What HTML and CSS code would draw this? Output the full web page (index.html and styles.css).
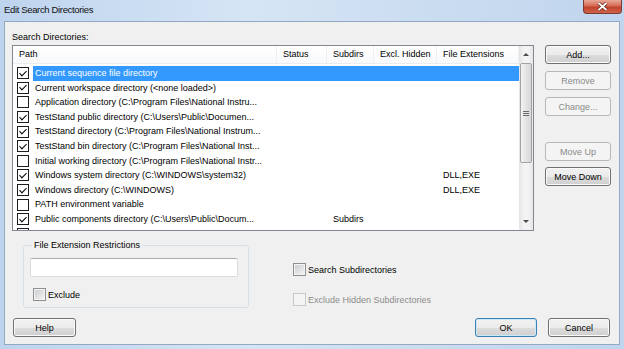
FILE: index.html
```html
<!DOCTYPE html>
<html lang="en">
<head>
    <meta charset="UTF-8">
    <meta name="viewport" content="width=device-width, initial-scale=1.0">
    <title>Edit Search Directories</title>
    <link rel="stylesheet" href="styles.css">
</head>
<body>
    <div class="window">
        <div class="titlebar">
            <span class="title">Edit Search Directories</span>
            <button class="close">
                <svg width="11" height="9" viewBox="0 0 11 9">
                    <path d="M1.5 1 L9.5 8 M9.5 1 L1.5 8" stroke="#5a1d14" stroke-width="3.2"/>
                    <path d="M1.5 1 L9.5 8 M9.5 1 L1.5 8" stroke="#fff" stroke-width="1.8"/>
                </svg>
            </button>
        </div>
        <div class="client">
            <div class="top">
                <div class="list-col">
                    <div class="caption">Search Directories:</div>
                    <div class="listbox">
                        <div class="table">
                            <div class="head">
                                <div>Path</div>
                                <div>Status</div>
                                <div>Subdirs</div>
                                <div>Excl. Hidden</div>
                                <div>File Extensions</div>
                            </div>
                            <div class="rows">
                                <div class="row selected"><span class="check on"></span><div class="cells"><span>Current sequence file directory</span><span></span><span></span><span></span><span></span></div></div>
                                <div class="row"><span class="check on"></span><div class="cells"><span>Current workspace directory (&lt;none loaded&gt;)</span><span></span><span></span><span></span><span></span></div></div>
                                <div class="row"><span class="check"></span><div class="cells"><span>Application directory (C:\Program Files\National Instru...</span><span></span><span></span><span></span><span></span></div></div>
                                <div class="row"><span class="check on"></span><div class="cells"><span>TestStand public directory (C:\Users\Public\Documen...</span><span></span><span></span><span></span><span></span></div></div>
                                <div class="row"><span class="check on"></span><div class="cells"><span>TestStand directory (C:\Program Files\National Instrum...</span><span></span><span></span><span></span><span></span></div></div>
                                <div class="row"><span class="check on"></span><div class="cells"><span>TestStand bin directory (C:\Program Files\National Inst...</span><span></span><span></span><span></span><span></span></div></div>
                                <div class="row"><span class="check"></span><div class="cells"><span>Initial working directory (C:\Program Files\National Instr...</span><span></span><span></span><span></span><span></span></div></div>
                                <div class="row"><span class="check on"></span><div class="cells"><span>Windows system directory (C:\WINDOWS\system32)</span><span></span><span></span><span></span><span>DLL,EXE</span></div></div>
                                <div class="row"><span class="check on"></span><div class="cells"><span>Windows directory (C:\WINDOWS)</span><span></span><span></span><span></span><span>DLL,EXE</span></div></div>
                                <div class="row"><span class="check"></span><div class="cells"><span>PATH environment variable</span><span></span><span></span><span></span><span></span></div></div>
                                <div class="row"><span class="check on"></span><div class="cells"><span>Public components directory (C:\Users\Public\Docum...</span><span></span><span>Subdirs</span><span></span><span></span></div></div>
                                <div class="row"><span class="check on"></span><div class="cells"><span></span><span></span><span></span><span></span><span></span></div></div>
                            </div>
                        </div>
                        <div class="vscroll">
                            <div class="sb-btn"><span class="arrow-up"></span></div>
                            <div class="track">
                                <div class="thumb"><span class="grip"></span></div>
                            </div>
                            <div class="sb-btn"><span class="arrow-down"></span></div>
                        </div>
                    </div>
                </div>
                <div class="side">
                    <button class="btn">Add...</button>
                    <button class="btn" disabled>Remove</button>
                    <button class="btn" disabled>Change...</button>
                    <button class="btn move-up" disabled>Move Up</button>
                    <button class="btn move-down">Move Down</button>
                </div>
            </div>

            <div class="bottom">
                <fieldset class="group">
                    <legend>File Extension Restrictions</legend>
                    <input type="text" class="ext-input">
                    <label class="cb-row exclude"><span class="cb"></span>Exclude</label>
                </fieldset>
                <div class="options">
                    <label class="cb-row"><span class="cb"></span>Search Subdirectories</label>
                    <label class="cb-row disabled"><span class="cb"></span>Exclude Hidden Subdirectories</label>
                </div>
            </div>

            <div class="footer">
                <button class="btn help">Help</button>
                <button class="btn default ok">OK</button>
                <button class="btn cancel">Cancel</button>
            </div>
        </div>
    </div>
</body>
</html>
```

FILE: styles.css
```css
* {
    box-sizing: border-box;
}
body {
    margin: 0;
    font-family: "Liberation Sans", Arial, sans-serif;
    font-size: 9px;
    color: #000;
}
.window {
    width: 624px;
    height: 349px;
    display: flex;
    flex-direction: column;
    background: linear-gradient(90deg, #bed4ee 0%, #d6e5f5 40%, #cadcf0 70%, #c0d5ee 100%);
}
.titlebar {
    height: 21px;
    display: flex;
    justify-content: space-between;
    align-items: flex-start;
    padding-left: 4px;
}
.title {
    margin-top: 4px;
    line-height: 12px;
    font-size: 9.5px;
    letter-spacing: -0.35px;
    color: #111;
}
.close {
    width: 39px;
    height: 14px;
    margin-right: 2px;
    padding: 0;
    border: 1px solid #7a3a30;
    border-top: none;
    border-radius: 0 0 4px 4px;
    background: linear-gradient(#e9a898 0%, #d56a55 45%, #c2432c 55%, #d0634b 100%);
    display: flex;
    align-items: center;
    justify-content: center;
}
.client {
    flex: 1;
    margin: 0 4px 4px 4px;
    border: 1px solid #93a8c1;
    background: #f0f0f0;
}

/* list + side buttons */
.top {
    display: flex;
    padding: 9px 0 0 7px;
}
.caption {
    line-height: 12px;
    margin-bottom: 2px;
}
.listbox {
    width: 522px;
    height: 186px;
    border: 1px solid #828790;
    background: #fff;
    display: flex;
}
.table {
    flex: 1;
    overflow: hidden;
}
.head {
    display: grid;
    grid-template-columns: 264px 50px 47px 63px 1fr;
    height: 18px;
    line-height: 17px;
    border-bottom: 1px solid #eaecef;
    background: linear-gradient(#fff, #f8f9fb);
}
.head div {
    padding-left: 6px;
    border-right: 1px solid #eef0f3;
    white-space: nowrap;
}
.rows {
    padding-top: 2px;
    height: 166px;
    overflow: hidden;
}
.row {
    display: flex;
    align-items: center;
    height: 14.6px;
}
.check {
    position: relative;
    flex: none;
    width: 12px;
    height: 12px;
    margin: 0 4px;
    border: 1px solid #1c1c1c;
    background: #fff;
}
.check.on::after {
    content: "";
    position: absolute;
    left: 3px;
    top: 0.5px;
    width: 3px;
    height: 6px;
    border: solid #000;
    border-width: 0 1.6px 1.6px 0;
    transform: rotate(45deg);
}
.cells {
    flex: 1;
    height: 100%;
    display: grid;
    grid-template-columns: 244px 50px 47px 63px 1fr;
    line-height: 14.6px;
}
.cells span {
    padding-left: 6px;
    white-space: nowrap;
    overflow: hidden;
}
.cells span:first-child {
    padding-left: 2px;
}
.row.selected .cells {
    background: #3399ff;
    color: #fff;
}
.vscroll {
    width: 14px;
    display: flex;
    flex-direction: column;
    background: linear-gradient(90deg, #e4e4e4, #f3f3f3 35%, #f3f3f3 65%, #e6e6e6);
}
.sb-btn {
    height: 17px;
    display: flex;
    align-items: center;
    justify-content: center;
}
.arrow-up {
    border-left: 3px solid transparent;
    border-right: 3px solid transparent;
    border-bottom: 3px solid #4a4a4a;
}
.arrow-down {
    border-left: 3px solid transparent;
    border-right: 3px solid transparent;
    border-top: 3px solid #4a4a4a;
}
.track {
    flex: 1;
}
.thumb {
    height: 100px;
    margin: 0 1px;
    border: 1px solid #a3a3a3;
    border-radius: 2px;
    background: linear-gradient(90deg, #f3f3f3, #e4e4e4 50%, #d6d6d6);
    display: flex;
    align-items: center;
    justify-content: center;
}
.grip {
    width: 6px;
    height: 5px;
    background: repeating-linear-gradient(#6a6a6a 0 1px, transparent 1px 2px);
}
.side {
    width: 66px;
    margin-left: 11px;
    padding-top: 14px;
    display: flex;
    flex-direction: column;
}
.side .btn {
    margin-bottom: 7px;
}
.side .move-up {
    margin-top: 19px;
    margin-bottom: 6px;
}

/* buttons */
.btn {
    height: 19px;
    padding: 0;
    font-family: inherit;
    font-size: 9px;
    color: #000;
    border: 1px solid #707070;
    border-radius: 3px;
    background: linear-gradient(#f2f2f2 0%, #ebebeb 50%, #dddddd 51%, #cfcfcf 100%);
    box-shadow: inset 0 0 0 1px #fbfbfb;
}
.btn:disabled {
    color: #8a8a8a;
    border-color: #b5b9bc;
    background: #f4f4f4;
    box-shadow: none;
}
.btn.default {
    border-color: #3c7fb1;
    box-shadow: inset 0 0 0 1px #c9e8f8;
}

/* bottom area */
.bottom {
    display: flex;
    margin-top: 8px;
    padding-left: 18px;
}
.group {
    margin: 0;
    width: 226px;
    padding: 7px 6px 6px 6px;
    border: 1px solid #d5dfe5;
    border-radius: 3px;
}
.group legend {
    margin-left: 2px;
    padding: 0 2px;
    line-height: 12px;
}
.ext-input {
    display: block;
    width: 208px;
    height: 19px;
    margin: 0;
    border: 1px solid #d8dde3;
    border-top-color: #abadb3;
    border-radius: 2px;
    background: #fff;
}
.cb-row {
    display: flex;
    align-items: center;
    height: 13px;
    white-space: nowrap;
}
.exclude {
    margin-top: 11px;
    padding-left: 3px;
}
.cb {
    flex: none;
    width: 13px;
    height: 13px;
    margin-right: 2px;
    border: 1px solid #8e8f8f;
    background: linear-gradient(135deg, #c9ccd1, #f5f5f5);
    box-shadow: inset 0 0 0 1px #f4f4f4;
}
.options {
    margin-left: 44px;
    padding-top: 24px;
    display: flex;
    flex-direction: column;
    gap: 17px;
}
.cb-row.disabled {
    color: #8d8d8d;
}
.cb-row.disabled .cb {
    border-color: #c8c8c8;
    background: #f4f4f4;
    box-shadow: none;
}
.footer {
    display: flex;
    margin-top: 10px;
    padding: 0 9px 0 8px;
}
.help {
    width: 63px;
}
.ok {
    width: 62px;
    margin-left: auto;
}
.cancel {
    width: 62px;
    margin-left: 11px;
}
```
